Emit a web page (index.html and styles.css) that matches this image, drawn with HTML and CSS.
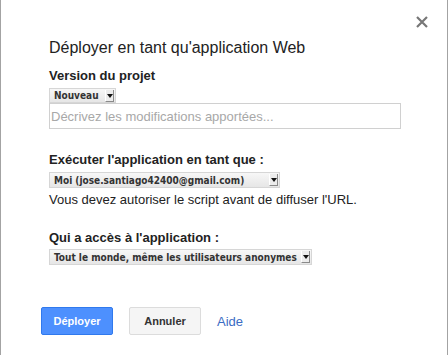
FILE: index.html
```html
<!DOCTYPE html>
<html lang="fr">
<head>
    <meta charset="UTF-8">
    <meta name="viewport" content="width=device-width, initial-scale=1.0">
    <title>Déployer en tant qu'application Web</title>
    <link rel="stylesheet" href="styles.css">
</head>
<body>
    <div class="dialog">
        <button class="close" title="Fermer">
            <svg width="12" height="12" viewBox="0 0 12 12">
                <path d="M1 1 L11 11 M11 1 L1 11" stroke="#777" stroke-width="2.2" fill="none"/>
            </svg>
        </button>

        <h1 class="title">Déployer en tant qu'application Web</h1>

        <div class="field">
            <div class="label">Version du projet</div>
            <div class="select select-version">
                <span class="select-text">Nouveau</span>
                <span class="select-arrow"></span>
            </div>
            <input class="describe" type="text" placeholder="Décrivez les modifications apportées...">
        </div>

        <div class="field field-exec">
            <div class="label">Exécuter l'application en tant que :</div>
            <div class="select select-exec">
                <span class="select-text">Moi (jose.santiago42400@gmail.com)</span>
                <span class="select-arrow"></span>
            </div>
            <div class="note">Vous devez autoriser le script avant de diffuser l'URL.</div>
        </div>

        <div class="field field-access">
            <div class="label">Qui a accès à l'application :</div>
            <div class="select select-access">
                <span class="select-text">Tout le monde, même les utilisateurs anonymes</span>
                <span class="select-arrow"></span>
            </div>
        </div>

        <div class="buttons">
            <button class="btn btn-primary">Déployer</button>
            <button class="btn">Annuler</button>
            <a class="help" href="#">Aide</a>
        </div>
    </div>
</body>
</html>
```

FILE: styles.css
```css
body {
    margin: 0;
    padding: 0;
    background-color: #ffffff;
}
.dialog {
    position: relative;
    height: 355px;
    box-sizing: border-box;
    border-left: 1px solid #a3a3a3;
    border-right: 1px solid #a3a3a3;
    padding: 38px 46px 0 48px;
    font-family: "Liberation Sans", Arial, sans-serif;
    color: #222222;
    background-color: #ffffff;
}
.close {
    position: absolute;
    top: 16px;
    right: 19px;
    border: none;
    background: none;
    padding: 0;
    width: 12px;
    height: 12px;
    cursor: pointer;
}
.close svg {
    display: block;
}
.title {
    margin: 0;
    font-size: 16px;
    font-weight: normal;
    line-height: 20px;
}
.field {
    margin-top: 10px;
}
.label {
    font-size: 13px;
    font-weight: bold;
    line-height: 16px;
}
.select {
    display: flex;
    align-items: center;
    height: 16px;
    box-sizing: border-box;
    margin-top: 4px;
    border: 1px solid #d6d6d6;
    background: linear-gradient(#f7f7f7, #e6e6e6);
    font-family: "DejaVu Sans Condensed", "DejaVu Sans", sans-serif;
    font-weight: bold;
    font-size: 10px;
    color: #333333;
}
.select-text {
    flex: 1;
    padding-left: 4px;
    white-space: nowrap;
}
.select-arrow {
    position: relative;
    width: 9px;
    height: 12px;
    margin-right: 1px;
    background-color: #ececec;
    border-left: 1px solid #ffffff;
    border-right: 1px solid #8a8a8a;
    border-bottom: 1px solid #8a8a8a;
    box-sizing: border-box;
}
.select-arrow::after {
    content: "";
    position: absolute;
    left: 1px;
    top: 4px;
    border-left: 3px solid transparent;
    border-right: 3px solid transparent;
    border-top: 4px solid #111111;
}
.select-version {
    width: 67px;
    height: 15px;
}
.select-exec {
    width: 231px;
}
.select-access {
    width: 263px;
}
.describe {
    display: block;
    width: 352px;
    height: 26px;
    box-sizing: border-box;
    margin: 0;
    padding: 0 1px;
    border: 1px solid #d0d0d0;
    font-family: "Liberation Sans", Arial, sans-serif;
    font-size: 13px;
    color: #222222;
}
.describe::placeholder {
    color: #a8a8a8;
}
.field-exec {
    margin-top: 23px;
}
.note {
    margin-top: 4px;
    font-size: 13px;
    line-height: 16px;
}
.field-access {
    margin-top: 22px;
}
.field-access .select {
    margin-top: 3px;
}
.buttons {
    display: flex;
    align-items: center;
    margin-top: 42px;
    margin-left: -8px;
}
.btn {
    width: 72px;
    height: 28px;
    margin-right: 16px;
    padding: 0;
    border: 1px solid #dcdcdc;
    border-radius: 2px;
    background-color: #f5f5f5;
    font-family: "Liberation Sans", Arial, sans-serif;
    font-size: 11px;
    font-weight: bold;
    color: #333333;
    cursor: pointer;
}
.btn-primary {
    background-color: #4d90fe;
    border-color: #3079ed;
    color: #ffffff;
}
.help {
    font-size: 13px;
    color: #3b6cc4;
    text-decoration: none;
}
```
